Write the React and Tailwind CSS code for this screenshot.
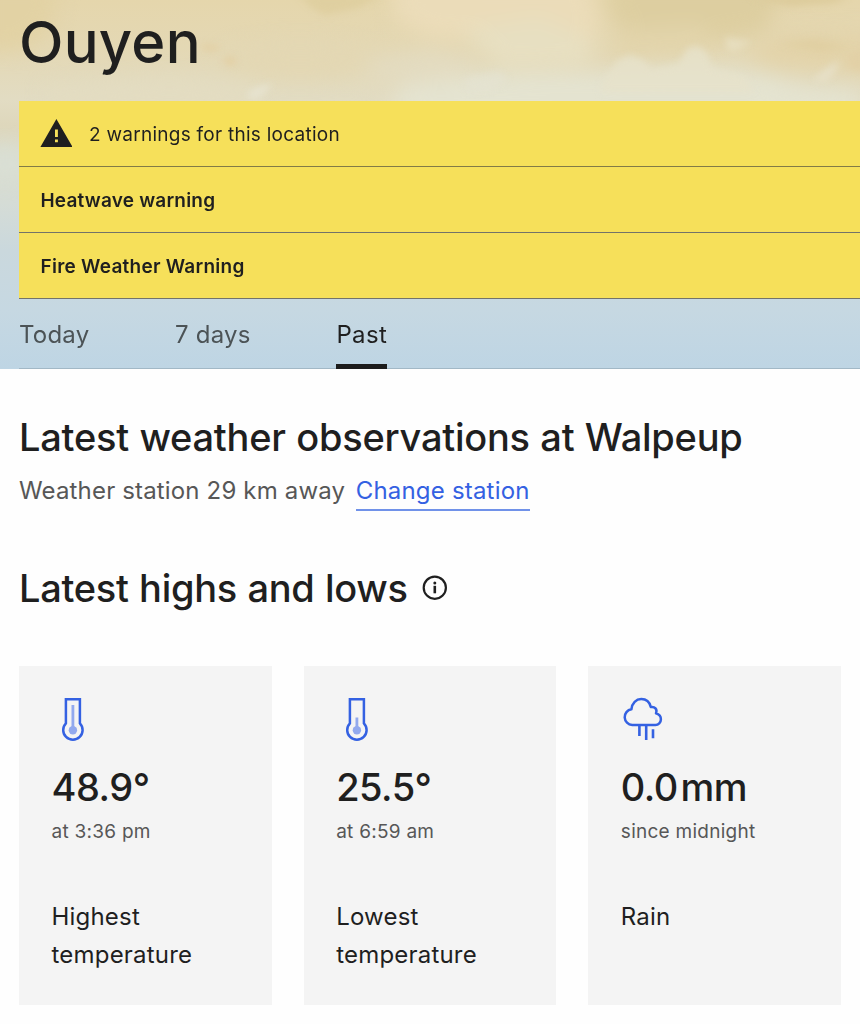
import React from "react";

function Sky() {
  return (
    <svg
      className="absolute inset-0 h-full w-full"
      viewBox="0 0 860 369"
      preserveAspectRatio="none"
      aria-hidden="true"
    >
      <defs>
        <linearGradient id="sky" x1="0" y1="0" x2="0" y2="1">
          <stop offset="0" stopColor="#e5d6ac" />
          <stop offset="0.13" stopColor="#e4d8b4" />
          <stop offset="0.27" stopColor="#e2dcc3" />
          <stop offset="0.34" stopColor="#ded7bc" />
          <stop offset="0.41" stopColor="#dbdccb" />
          <stop offset="0.55" stopColor="#d5dcd6" />
          <stop offset="0.68" stopColor="#cad8dd" />
          <stop offset="0.84" stopColor="#c6d8e2" />
          <stop offset="1" stopColor="#bed5e4" />
        </linearGradient>
        <filter id="soft" x="-50%" y="-50%" width="200%" height="200%" colorInterpolationFilters="sRGB">
          <feGaussianBlur stdDeviation="10" />
        </filter>
        <filter id="wisp" x="-50%" y="-50%" width="200%" height="200%" colorInterpolationFilters="sRGB">
          <feGaussianBlur stdDeviation="3.5" />
        </filter>
      </defs>
      <rect width="860" height="369" fill="url(#sky)" />
      <g filter="url(#soft)">
        <path d="M-20 -20 H60 L50 30 L20 50 L-20 50 Z" fill="#e2d2a4" />
        <ellipse cx="300" cy="60" rx="80" ry="18" fill="#e3d7b3" />
        <path d="M390 -20 H590 L600 30 L585 42 L430 38 L395 20 Z" fill="#ebdcb9" />
        <path d="M460 30 L540 18 L595 42 L588 66 L500 68 Z" fill="#e7dfc1" />
        <path d="M370 62 L430 50 L480 62 L450 84 L360 80 Z" fill="#e3dbc0" />
        <path d="M400 86 L470 76 L540 74 L600 74 L690 66 L760 74 L800 86 L860 92 V120 H390 Z" fill="#e4e3d0" />
        <path d="M40 88 L170 78 L260 86 L250 110 H60 Z" fill="#e3dcc1" />
        <path d="M608 -20 H785 L765 32 L700 42 L640 38 L612 20 Z" fill="#ddcea0" />
        <path d="M618 30 L700 24 L720 46 L680 58 L640 56 L612 60 Z" fill="#e2d4ab" />
        <path d="M745 54 L780 34 L880 32 V74 L770 66 Z" fill="#e3d3a9" />
        <ellipse cx="5" cy="164" rx="22" ry="16" fill="#d9dfd5" />
      </g>
      <g filter="url(#wisp)">
        <path d="M298 -6 H384 L358 8 L325 15 L312 8 Z" fill="#dfcfa0" />
        <path d="M745 -5 H850 L835 3 L790 6 Z" fill="#dccb9b" />
        <path d="M780 44 L815 39 L850 47 L820 52 Z" fill="#e0cfa2" />
        <path d="M605 78 L618 60 L630 55 L643 60 L652 70 L678 64 L688 48 L698 46 L708 54 L712 68 L745 76 L755 92 H600 Z" fill="#e6e2ca" opacity="0.85" />
        <path d="M725 37 L738 40 L752 41 L735 51 L728 50 Z" fill="#e8dfc2" opacity="0.85" />
        <path d="M846 58 L864 48 V72 L850 68 Z" fill="#e2d0a6" />
        <path d="M246 94 L255 88 L272 83 L268 90 L258 99 L250 99 Z" fill="#e7e3d0" opacity="0.9" />
        <ellipse cx="230" cy="61" rx="6" ry="4" fill="#e3cfa3" />
        <path d="M200 44 L220 46 L216 51 L204 50 Z" fill="#e3cfa3" />
        <path d="M465 78 L500 71 L508 80 L490 90 L467 92 Z" fill="#e5e3d2" opacity="0.6" />
        <path d="M812 80 L828 67 L840 60 L834 74 L825 82 Z" fill="#e7e1ca" opacity="0.8" />
      </g>
    </svg>
  );
}

function WarningIcon() {
  return (
    <svg className="mb-[2px] block h-7 w-8" viewBox="0 0 32 28" aria-hidden="true">
      <path
        fillRule="evenodd"
        d="M16.4 0 32.6 28H0.4Z M15 10.4V18H17.9V10.4Z M15 20.4V23.3H17.9V20.4Z"
        fill="#1f1f1f"
      />
    </svg>
  );
}

function InfoIcon() {
  return (
    <svg className="block size-[26px]" viewBox="0 0 26 26" aria-hidden="true">
      <circle cx="12.8" cy="12.7" r="11.1" fill="none" stroke="#1f1f1f" strokeWidth="2.2" />
      <circle cx="12.8" cy="8" r="1.5" fill="#1f1f1f" />
      <path d="M12.8 10.8V18.3" stroke="#1f1f1f" strokeWidth="2.6" />
    </svg>
  );
}

function Thermometer({ top }) {
  return (
    <svg className="block h-[46px] w-[42px]" viewBox="0 0 42 46" fill="none" aria-hidden="true">
      <path
        d="M13.9 3.2H27.9V27.3A9.7 9.7 0 1 1 13.9 27.3Z"
        stroke="#3461e2"
        strokeWidth="2.5"
      />
      <path d={`M20.9 ${top}V34`} stroke="#92a9ee" strokeWidth="2.8" />
      <circle cx="20.9" cy="34.2" r="4.2" fill="#92a9ee" />
    </svg>
  );
}

function RainCloud() {
  return (
    <svg className="block h-[46px] w-[42px]" viewBox="0 0 42 46" fill="none" aria-hidden="true">
      <path
        d="M11.2 29A7.9 7.9 0 0 1 10.4 13.3C11 6.9 15.2 3.1 20.3 3.1C24.9 3.1 28.6 6.2 29.8 11C33.8 10.3 36.6 13.2 35 17.4C37.9 18.2 39.9 20.4 39.9 23.2C39.9 26.5 37.4 29 34.4 29Z"
        stroke="#3461e2"
        strokeWidth="2.5"
        strokeLinejoin="round"
      />
      <path d="M18.4 29V40M25.2 29V44M32 33.2V42.2" stroke="#3461e2" strokeWidth="2.6" />
    </svg>
  );
}

function Card({ icon, value, unit, note, children }) {
  return (
    <div className="h-[339px] flex-1 bg-[#f4f4f4] pt-[30px] pl-[32.5px]">
      {icon}
      <div className="mt-[21px] flex h-12 items-center gap-[2.5px] text-[38px] leading-[48px] font-medium tracking-[-0.5px]">
        <span>{value}</span>
        {unit && <span>{unit}</span>}
      </div>
      <p className="mt-[6px] text-[19px] leading-[30px] tracking-[0.26px] text-[#575757]">{note}</p>
      <p className="mt-[51px] text-2xl leading-[38px] tracking-[0.2px]">{children}</p>
    </div>
  );
}

export default function App() {
  return (
    <div className="h-[1024px] w-full overflow-hidden bg-[#fefefe] font-['Inter',sans-serif] text-[#1f1f1f]">
      <header className="relative h-[369px] pl-[19px]">
        <Sky />
        <div className="relative flex h-full flex-col">
          <h1 className="h-[101px] pt-[7px] text-[58px] leading-[70px] font-medium tracking-[0.25px]">
            <span>Ouyen</span>
          </h1>
          <div className="bg-[#f6e05a] text-[19px]">
            <div className="flex h-[66px] items-center gap-[17px] border-b border-[#827b46] pl-[21px]">
              <WarningIcon />
              <span className="pt-[3px] tracking-[0.26px]">2 warnings for this location</span>
            </div>
            <div className="flex h-[66px] items-center border-b border-[#737369] pt-[3px] pl-[21.5px] font-semibold">
              <span className="tracking-[0.2px]">Heatwave warning</span>
            </div>
            <div className="flex h-[66px] items-center border-b border-[#737369] pt-[3px] pl-[21.5px] font-semibold">
              <span className="tracking-[0.25px]">Fire Weather Warning</span>
            </div>
          </div>
          <nav className="flex h-[70px] border-b border-[#a2b8c6] text-2xl leading-[38px] tracking-[0.2px] text-[#4c5356]">
            <span className="w-[156px] pt-[17px]">Today</span>
            <span className="w-[161.4px] pt-[17px]">7 days</span>
            <span className="h-[70px] w-[50.6px] border-b-[5px] border-[#1c1c1c] pt-[17px] tracking-[0.4px] text-[#1f1f1f]">
              Past
            </span>
          </nav>
        </div>
      </header>
      <main className="px-[19px]">
        <h2 className="mt-[44px] text-[38px] leading-[48px] font-medium tracking-[-0.24px] [word-spacing:0.6px]">
          <span>Latest weather observations at Walpeup</span>
        </h2>
        <div className="mt-[11px] flex h-[39px] gap-[10.5px] text-2xl leading-[38px] tracking-[0.16px] text-[#575757]">
          <span>Weather station 29 km away</span>
          <a className="border-b-2 border-[#7092e9] tracking-[0.2px] text-[#3461e2]">Change station</a>
        </div>
        <div className="mt-[53px] flex items-center gap-[14px]">
          <h2 className="text-[38px] leading-[48px] font-medium tracking-[-0.28px] [word-spacing:0.6px]">
            Latest highs and lows
          </h2>
          <InfoIcon />
        </div>
        <div className="mt-[54px] flex gap-8">
          <Card icon={<Thermometer top={9} />} value="48.9°" note="at 3:36 pm">
            Highest
            <br />
            temperature
          </Card>
          <Card icon={<Thermometer top={21.5} />} value="25.5°" note="at 6:59 am">
            Lowest
            <br />
            temperature
          </Card>
          <Card icon={<RainCloud />} value="0.0" unit="mm" note="since midnight">
            Rain
          </Card>
        </div>
      </main>
    </div>
  );
}
